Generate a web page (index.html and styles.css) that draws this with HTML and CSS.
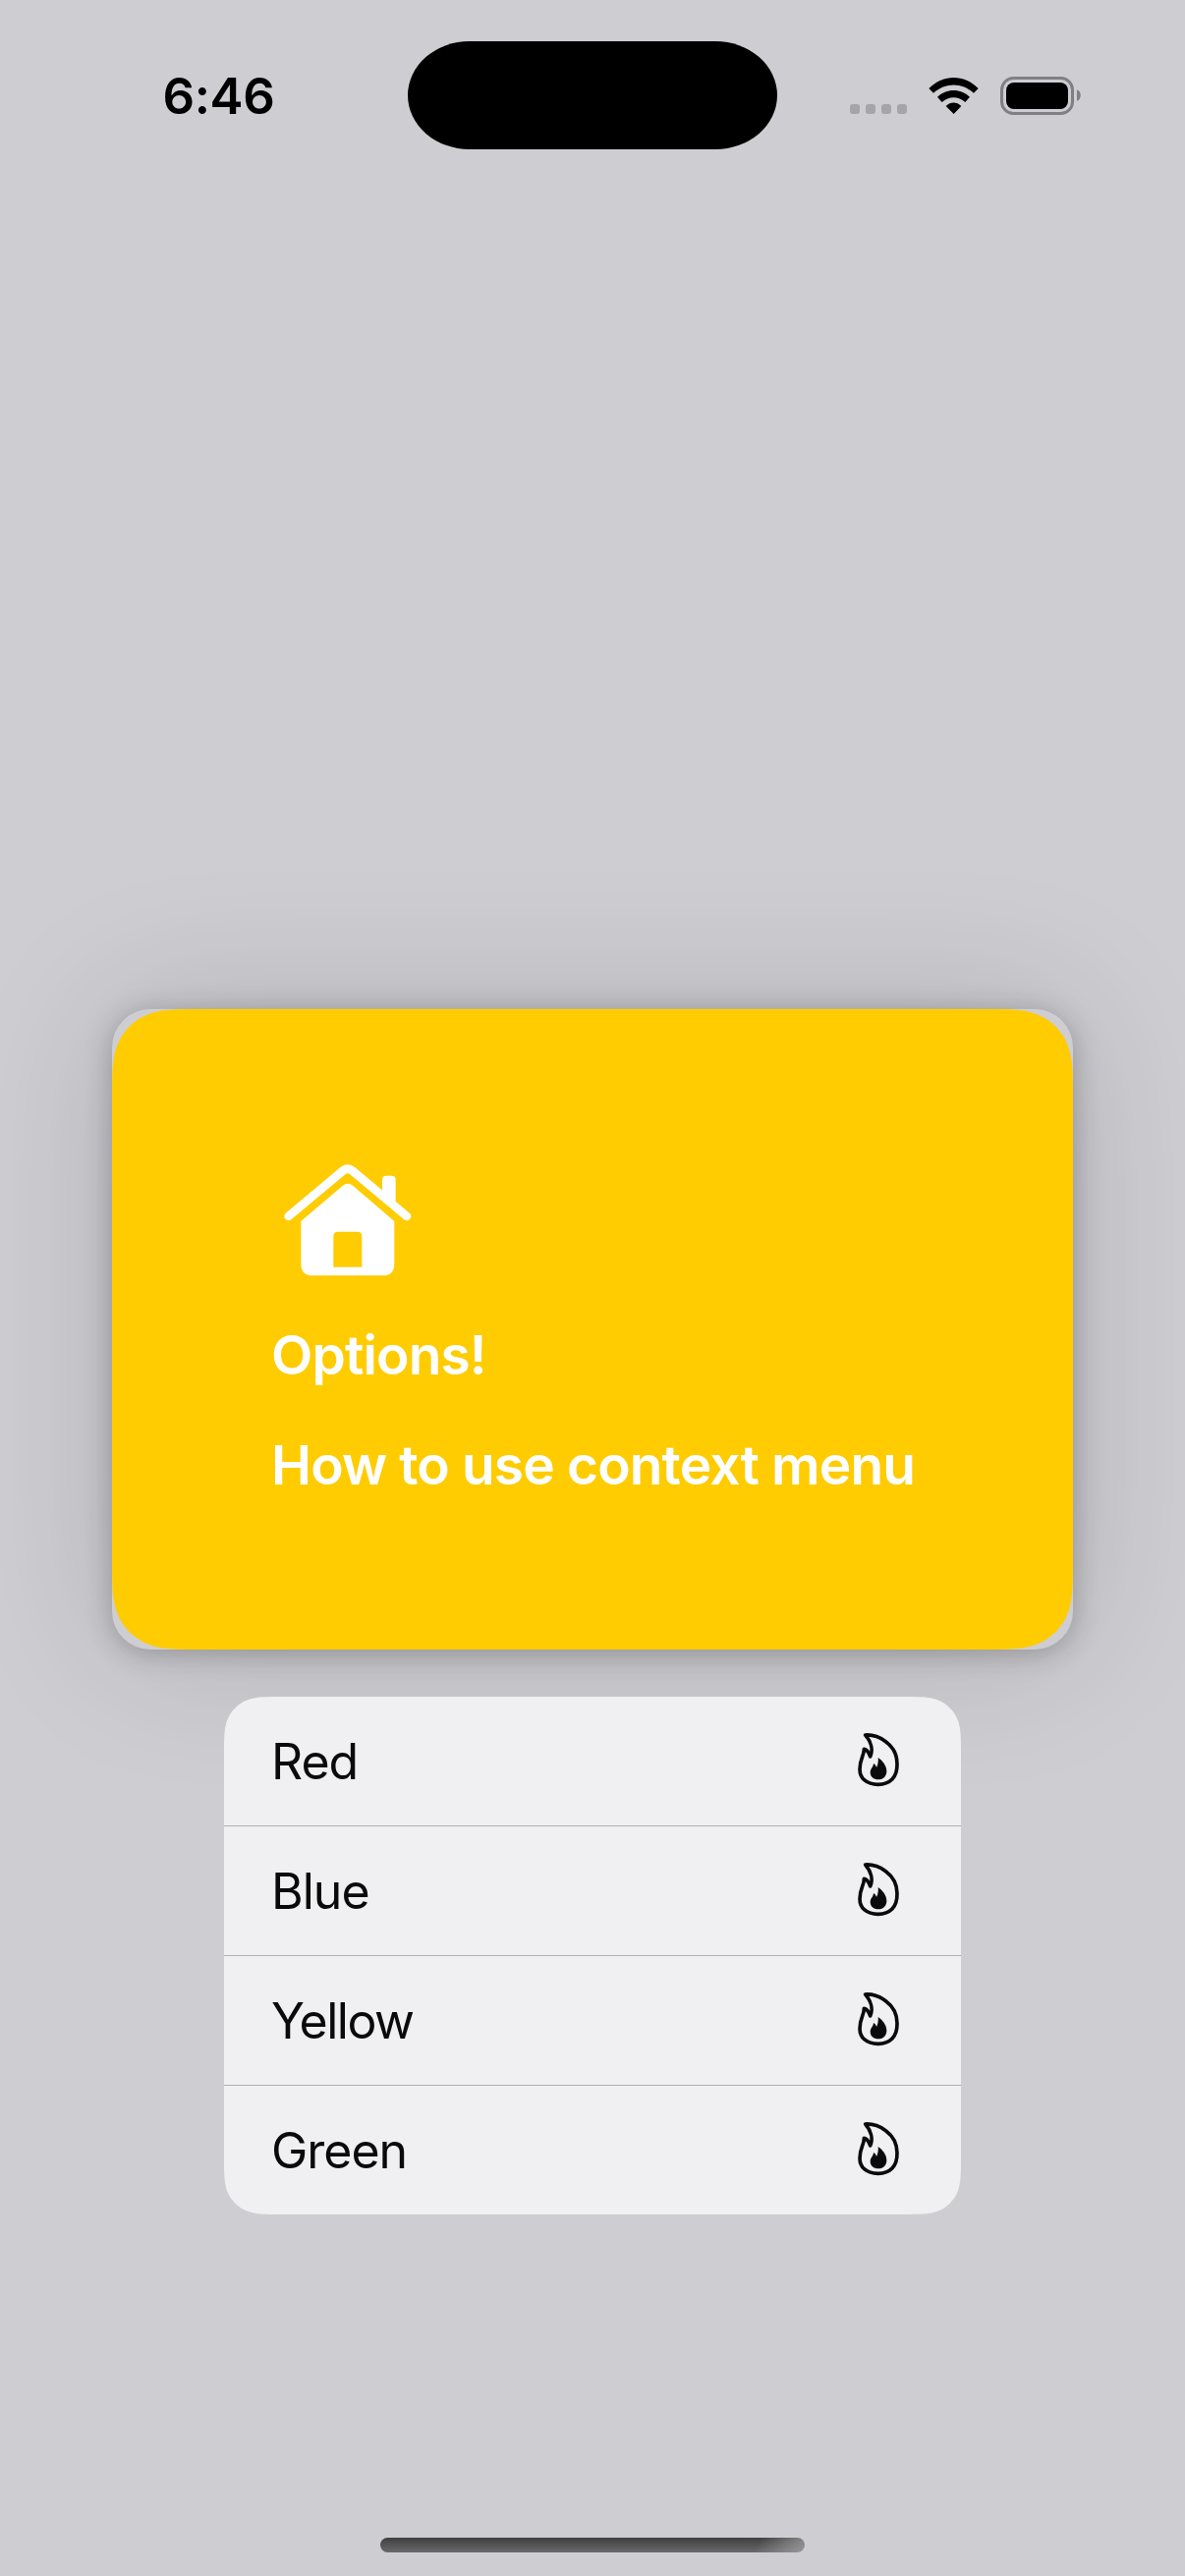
FILE: index.html
```
<!DOCTYPE html>
<html lang="en">
<head>
<meta charset="utf-8">
<title>Context menu</title>
<link rel="stylesheet" href="styles.css">
</head>
<body>
<svg class="defs" width="0" height="0" aria-hidden="true">
  <symbol id="flame" viewBox="65 65 135 175">
    <path d="M91 77C128 75 188 103 188 165C189 207 166 228 130 228C94 228 74 209 74 181C74 150 88 139 87 120C96 121 102 131 106 143C115 123 109 98 91 77Z" fill="none" stroke="currentColor" stroke-width="11" stroke-linejoin="round"/>
    <path d="M130 146C143 155 156 170 156 187C156 203 146 213 131 213C116 213 106 204 106 191C106 180 115 176 116 164C121 166 124 171 125 176C130 167 131 156 130 146Z" fill="currentColor"/>
  </symbol>
</svg>
<div class="screen">
  <header class="status">
    <time class="clock">6:46</time>
    <div class="island"></div>
    <div class="indicators">
      <div class="dots"><i></i><i></i><i></i><i></i></div>
      <svg class="wifi" viewBox="315 54 154 116">
        <path d="M316 90C360 46 424 46 467 90L453 104C418 71 366 71 330 104Z"/>
        <path d="M342 116C369 89 414 89 441 116L427 132C407 113 376 113 356 132Z"/>
        <path d="M368 144C382 130 401 130 415 144L392 168Z"/>
      </svg>
      <svg class="battery" viewBox="0 0 83 39">
        <rect x="1.5" y="1.5" width="72" height="36" rx="12" fill="none" stroke="#808083" stroke-width="3"/>
        <rect x="6" y="6" width="63" height="27" rx="8"/>
        <path d="M78 13.2C83 15 83 23 78 24.8Z" fill="#808083"/>
      </svg>
    </div>
  </header>
  <main class="content">
    <section class="preview">
      <div class="card">
        <svg class="house" viewBox="50 70 400 350">
          <path d="M70 235L236 96Q250 84 265 96L431 235" fill="none" stroke="#fff" stroke-width="26" stroke-linecap="round"/>
          <path d="M356 160V124Q356 111 369 111H385Q397 111 397 124V200Z" fill="#fff"/>
          <path fill-rule="evenodd" d="M108 250L236 141Q250 130 266 141L393 250V382Q391 416 360 416H141Q110 416 108 382ZM207 390H294V296Q294 282 280 282H221Q207 282 207 296Z" fill="#fff"/>
        </svg>
        <p class="title">Options!</p>
        <p class="subtitle">How to use context menu</p>
      </div>
    </section>
    <ul class="menu">
      <li><span class="red">Red</span><svg><use href="#flame"/></svg></li>
      <li><span class="blue">Blue</span><svg><use href="#flame"/></svg></li>
      <li><span class="yellow">Yellow</span><svg><use href="#flame"/></svg></li>
      <li><span class="green">Green</span><svg><use href="#flame"/></svg></li>
    </ul>
  </main>
  <div class="home"></div>
</div>
</body>
</html>
```
FILE: styles.css
```
* { box-sizing: border-box; margin: 0; padding: 0; }
body { background: #cecdd2; font-family: Inter, "Liberation Sans", sans-serif; color: #000; }
.defs { display: block; }
.screen { width: 1206px; height: 2622px; display: flex; flex-direction: column; align-items: center; overflow: hidden; }
.status { width: 100%; height: 1027px; flex: none; display: grid; grid-template-columns: 415px 376px 415px; align-items: start; padding-top: 42px; }
.clock { font-size: 51px; font-weight: 600; line-height: 60px; letter-spacing: -.4px; padding: 26px 0 0 165.5px; }
.island { height: 110px; border-radius: 63px / 55px; background: #000; }
.indicators { display: flex; padding: 36px 0 0 74px; }
.dots { display: flex; gap: 6px; padding-top: 28px; }
.dots i { width: 10px; height: 10px; border-radius: 3px; background: #a5a5a8; }
.wifi { width: 51.3px; height: 38.7px; margin-left: 22px; }
.battery { width: 83px; height: 39px; margin-left: 21.7px; }
.content { display: flex; flex-direction: column; align-items: center; gap: 48px; }
.preview { width: 978px; height: 652px; border-radius: 39px; background: #cecdd2; box-shadow: 0 0 150px rgba(0,0,0,.15), 0 4px 28px rgba(0,0,0,.24); }
.card { height: 652px; padding: 156.3px 0 0 162px; background: #ffcc02; color: #fff; clip-path: path("M97 0H881C912.7 0 925.9 0 940.1 5C955.6 10.6 967.4 22.4 973 37.9C978 52.1 978 65.3 978 97V555C978 586.7 978 599.9 973 614.1C967.4 629.6 955.6 641.4 940.1 647C925.9 652 912.7 652 881 652H97C65.3 652 52.1 652 37.9 647C22.4 641.4 10.6 629.6 5 614.1C0 599.9 0 586.7 0 555V97C0 65.3 0 52.1 5 37.9C10.6 22.4 22.4 10.6 37.9 5C52.1 0 65.3 0 97 0Z"); }
.house { display: block; width: 133.3px; height: 116.7px; margin-left: 10.7px; }
.title, .subtitle { font-size: 55px; font-weight: 600; line-height: 66px; letter-spacing: -.84px; white-space: nowrap; }
.title { margin-top: 46px; }
.subtitle { margin-top: 46px; }
.menu { width: 750px; list-style: none; background: #f0f0f2; clip-path: path("M59.6 0H690.4C707.5 0 716.1 0 725.4 2.9C735.5 6.6 743.4 14.5 747.1 24.6C750 33.9 750 42.5 750 59.6V467.4C750 484.5 750 493.1 747.1 502.4C743.4 512.5 735.5 520.4 725.4 524.1C716.1 527 707.5 527 690.4 527H59.6C42.5 527 33.9 527 24.6 524.1C14.5 520.4 6.6 512.5 2.9 502.4C0 493.1 0 484.5 0 467.4V59.6C0 42.5 0 33.9 2.9 24.6C6.6 14.5 14.5 6.6 24.6 2.9C33.9 0 42.5 0 59.6 0Z"); }
.menu li { display: flex; justify-content: space-between; height: 132px; padding: 34.7px 61.3px 0 48px; border-bottom: 1px solid #b0b0b3; font-size: 50px; line-height: 62px; letter-spacing: -1px; color: #0a0a0a; }
.menu li:last-child { height: 131px; border: 0; }
.menu .yellow { letter-spacing: -1.5px; }
.menu svg { width: 45px; height: 58.3px; }
.home { width: 432px; height: 15px; margin-top: 329px; border-radius: 8px; background: linear-gradient(120deg, transparent 88%, rgba(160,160,163,.85)), linear-gradient(#3f3f40, #69696b); }
```
